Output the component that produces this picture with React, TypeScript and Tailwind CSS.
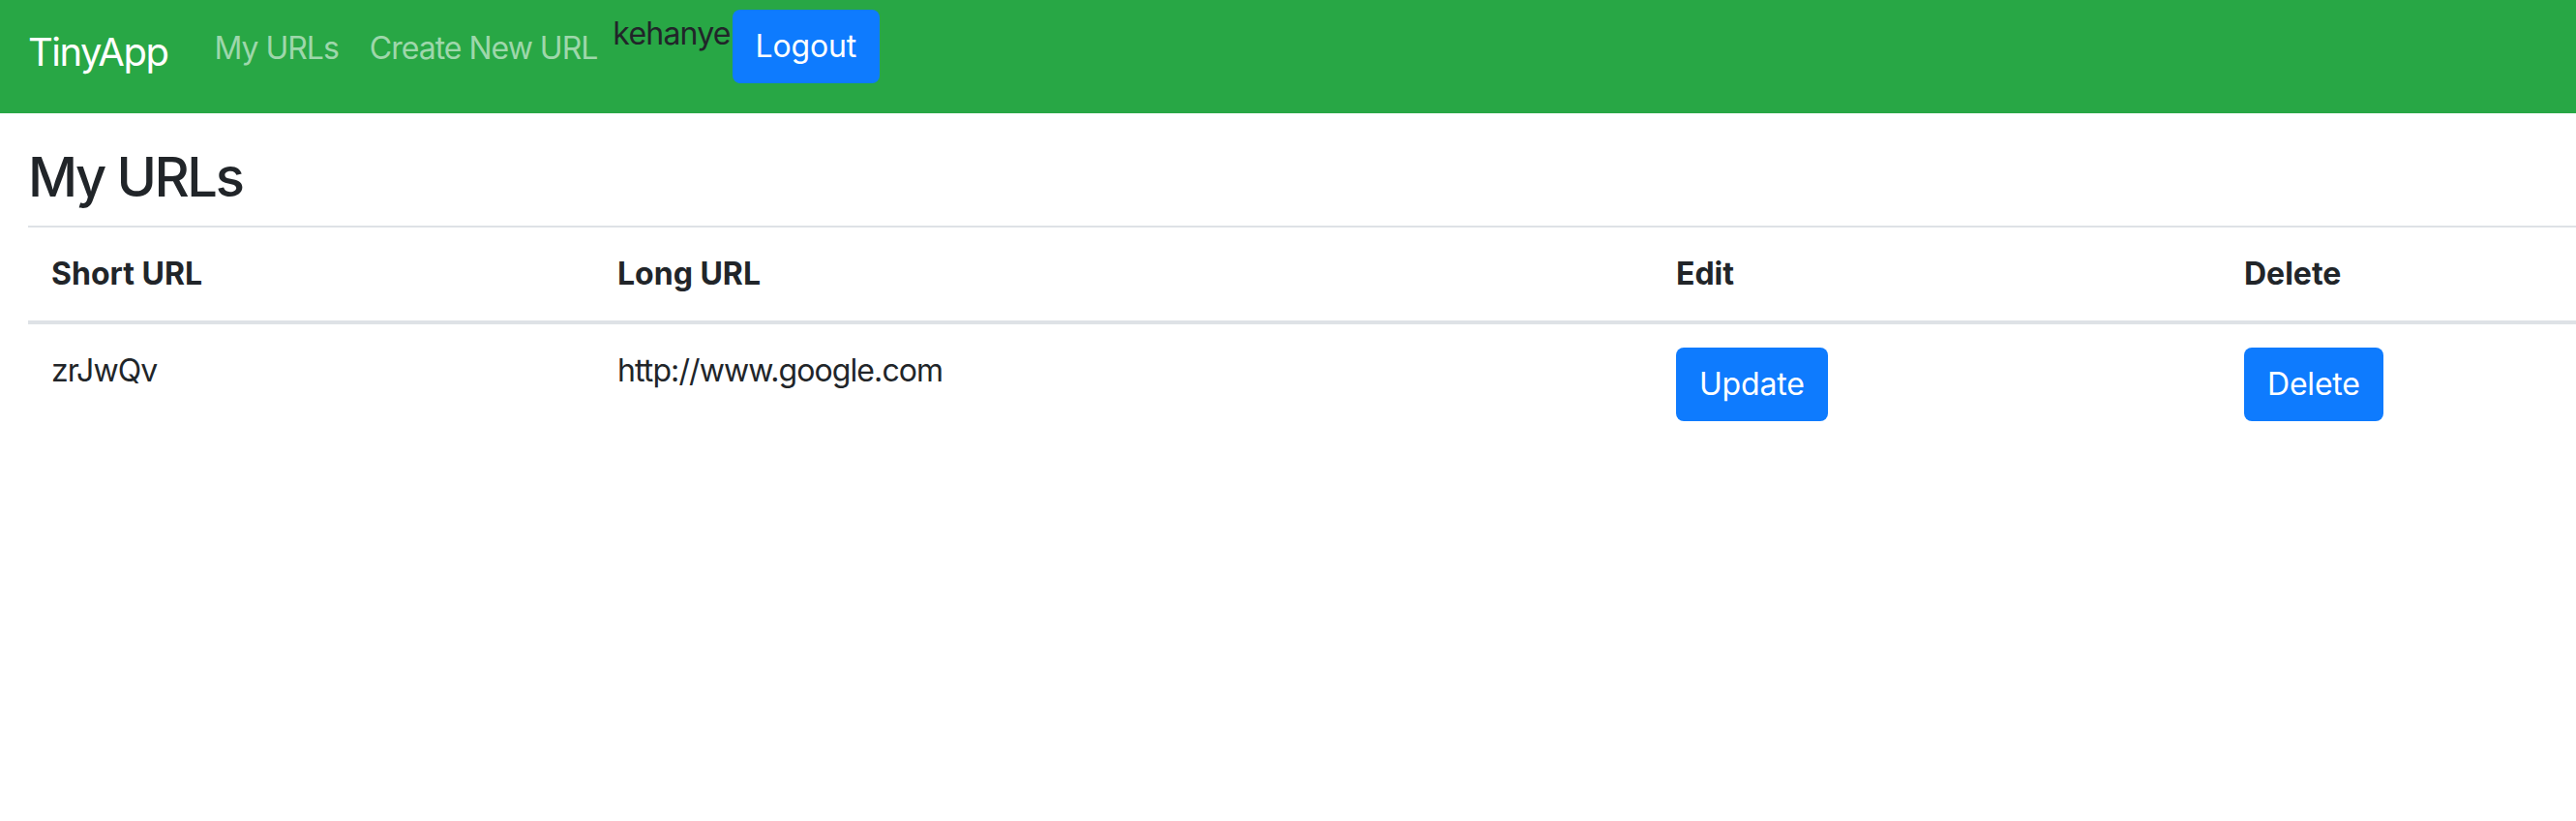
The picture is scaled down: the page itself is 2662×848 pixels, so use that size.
const NAV_LINKS = ["My URLs", "Create New URL"] as const;

const URLS = [{ short: "zrJwQv", long: "http://www.google.com" }];

function Button({ children }: { children: string }) {
  return (
    <button className="h-[76px] rounded-[8px] bg-[#0e7bfe] px-[24px] text-[32px] leading-[48px] tracking-[-0.2px] text-white">
      {children}
    </button>
  );
}

export default function App() {
  return (
    <div className="min-h-[848px] bg-white font-['Inter','Liberation_Sans',sans-serif] text-[#212529]">
      <nav className="flex h-[117px] items-start bg-[#28a745] pl-[29px]">
        <a className="mt-[24px] mr-[32px] text-[40px] leading-[60px] tracking-[-1.5px] text-white">
          TinyApp
        </a>
        <ul className="flex">
          {NAV_LINKS.map((label) => (
            <li key={label}>
              <a className="mt-[26px] block px-[16px] text-[32px] leading-[48px] tracking-[-1px] text-[#9ed7ab]">
                {label}
              </a>
            </li>
          ))}
        </ul>
        <span className="mt-[11px] text-[32px] leading-[48px] tracking-[-0.8px]">kehanye</span>
        <div className="mt-[10px] ml-[2px]">
          <Button>Logout</Button>
        </div>
      </nav>

      <main className="pl-[29px]">
        <h3 className="pt-[33px] pb-[16px] text-[56px] leading-[67px] font-medium tracking-[-2.4px]">
          My URLs
        </h3>
        <table className="w-full border-collapse text-left text-[32px] leading-[48px] tracking-[-0.9px]">
          <thead>
            <tr className="border-t-2 border-b-4 border-[#dee2e6]">
              <th className="w-[585px] p-[24px] font-bold tracking-[0px]">Short URL</th>
              <th className="w-[1094px] p-[24px] font-bold tracking-[0px]">Long URL</th>
              <th className="w-[587px] p-[24px] font-bold tracking-[0px]">Edit</th>
              <th className="p-[24px] font-bold tracking-[0px]">Delete</th>
            </tr>
          </thead>
          <tbody>
            {URLS.map((u) => (
              <tr key={u.short}>
                <td className="p-[24px] align-top">{u.short}</td>
                <td className="p-[24px] align-top">{u.long}</td>
                <td className="p-[24px] align-top">
                  <Button>Update</Button>
                </td>
                <td className="p-[24px] align-top">
                  <Button>Delete</Button>
                </td>
              </tr>
            ))}
          </tbody>
        </table>
      </main>
    </div>
  );
}
